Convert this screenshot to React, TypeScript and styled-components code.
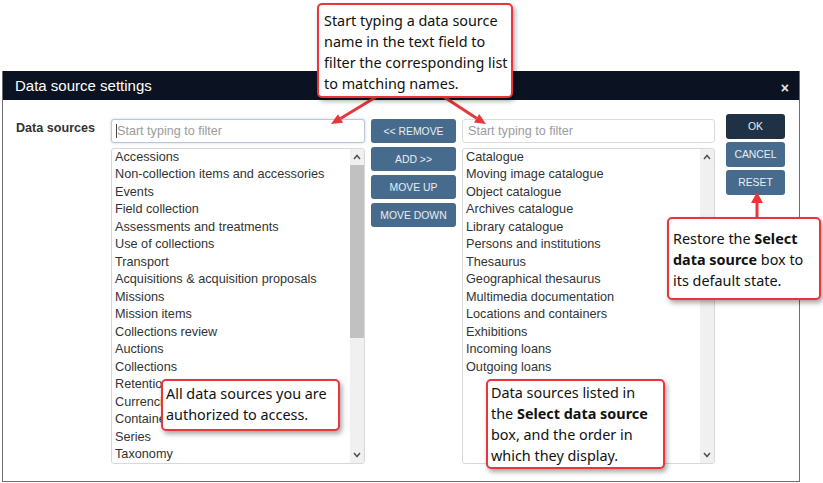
import React from 'react';
import styled, { createGlobalStyle } from 'styled-components';

const Global = createGlobalStyle`
  html, body { margin: 0; padding: 0; background: #fff; }
  body { font-family: "Liberation Sans", Arial, sans-serif; }
`;

const RED = '#e8363c';

const Page = styled.div`
  position: relative;
  width: 823px;
  height: 483px;
  overflow: hidden;
  background: #fff;
  padding: 71px 0 0 2px;
  box-sizing: border-box;
`;

const Dialog = styled.div`
  width: 798px;
  height: 411px;
  box-sizing: border-box;
  border: 1px solid #6e6e6e;
  border-top: none;
  display: flex;
  flex-direction: column;
  background: #fff;
`;

const Header = styled.div`
  height: 29px;
  flex: none;
  background: #0b1322;
  display: flex;
  align-items: center;
  justify-content: space-between;
  padding: 0 10px 0 12px;
`;

const Title = styled.div`
  color: #fff;
  font-size: 15px;
  line-height: 18px;
  margin-top: 1px;
`;

const Close = styled.div`
  color: #e6e6e6;
  font-size: 14px;
  font-weight: bold;
  line-height: 14px;
  margin-top: 4px;
`;

const Body = styled.div`
  flex: 1;
  display: flex;
  align-items: flex-start;
  padding: 14px 0 0 13px;
`;

const Label = styled.div`
  width: 95px;
  flex: none;
  margin-top: 7px;
  font-size: 12.6px;
  line-height: 15px;
  font-weight: bold;
  color: #333;
`;

const Column = styled.div<{ $w: number; $ml: number; $mt: number }>`
  width: ${p => p.$w}px;
  margin-left: ${p => p.$ml}px;
  margin-top: ${p => p.$mt}px;
  flex: none;
  display: flex;
  flex-direction: column;
`;

const FilterWrap = styled.div`
  position: relative;
  height: 24px;
  margin-bottom: 5px;
`;

const Filter = styled.input<{ $focused?: boolean }>`
  width: 100%;
  height: 24px;
  box-sizing: border-box;
  border: 1px solid ${p => (p.$focused ? '#b9c8d7' : '#dcdcdc')};
  border-radius: 3px;
  padding: 0 0 0 5px;
  margin: 0;
  font: 12.6px "Liberation Sans", Arial, sans-serif;
  color: #333;
  outline: none;
  box-shadow: ${p => (p.$focused ? '0 0 3px rgba(90,130,170,0.35)' : 'none')};
  &::placeholder { color: #9c9c9c; }
`;

const Caret = styled.span`
  position: absolute;
  left: 5px;
  top: 5px;
  width: 1px;
  height: 14px;
  background: #444;
`;

const ListBox = styled.div`
  height: 316px;
  box-sizing: border-box;
  border: 1px solid #d8d8d8;
  border-radius: 3px;
  display: flex;
  overflow: hidden;
  background: #fff;
`;

const Items = styled.div`
  flex: 1;
  padding-left: 3px;
  margin-top: -0.5px;
  overflow: hidden;
`;

const Item = styled.div`
  font-size: 12.7px;
  line-height: 17.5px;
  color: #333;
  white-space: nowrap;
`;

const Scrollbar = styled.div`
  width: 14px;
  flex: none;
  background: #f0f0f0;
  display: flex;
  flex-direction: column;
`;

const ArrowCell = styled.div`
  height: 16px;
  flex: none;
  display: flex;
  align-items: center;
  justify-content: center;
`;

const Track = styled.div`
  flex: 1;
`;

const Thumb = styled.div`
  background: #c1c1c1;
  width: 100%;
`;

const Buttons = styled.div<{ $gap: number }>`
  display: flex;
  flex-direction: column;
  gap: ${p => p.$gap}px;
`;

const Btn = styled.button<{ $dark?: boolean; $h: number }>`
  height: ${p => p.$h}px;
  width: 100%;
  border: none;
  border-radius: 3px;
  background: ${p => (p.$dark ? '#1f3145' : '#476b8c')};
  color: #e8eef4;
  font: 10.4px "Liberation Sans", Arial, sans-serif;
  padding: 0;
  margin: 0;
  cursor: pointer;
`;

const Callout = styled.div<{ $x: number; $y: number; $w: number; $h: number; $pt: number; $pl: number }>`
  position: absolute;
  left: ${p => p.$x}px;
  top: ${p => p.$y}px;
  width: ${p => p.$w}px;
  height: ${p => p.$h}px;
  box-sizing: border-box;
  background: #fff;
  border: 2px solid ${RED};
  border-radius: 5px;
  box-shadow: 2px 3px 5px rgba(0, 0, 0, 0.35);
  padding: ${p => p.$pt}px 0 0 ${p => p.$pl}px;
  font-family: "Noto Sans", "Open Sans", sans-serif;
  font-size: 14.4px;
  line-height: 21px;
  color: #111;
  white-space: nowrap;
  z-index: 3;
  b { font-weight: bold; }
`;

const Arrows = styled.svg`
  position: absolute;
  left: 0;
  top: 0;
  z-index: 2;
  pointer-events: none;
`;

const Chevron = ({ up }: { up?: boolean }) => (
  <svg width="8" height="6" viewBox="0 0 8 6">
    <polyline
      points={up ? '1,5 4,1.5 7,5' : '1,1 4,4.5 7,1'}
      fill="none"
      stroke="#505050"
      strokeWidth="1.5"
    />
  </svg>
);

const leftItems = [
  'Accessions',
  'Non-collection items and accessories',
  'Events',
  'Field collection',
  'Assessments and treatments',
  'Use of collections',
  'Transport',
  'Acquisitions & acquisition proposals',
  'Missions',
  'Mission items',
  'Collections review',
  'Auctions',
  'Collections',
  'Retention',
  'Currencies',
  'Containers',
  'Series',
  'Taxonomy',
];

const rightItems = [
  'Catalogue',
  'Moving image catalogue',
  'Object catalogue',
  'Archives catalogue',
  'Library catalogue',
  'Persons and institutions',
  'Thesaurus',
  'Geographical thesaurus',
  'Multimedia documentation',
  'Locations and containers',
  'Exhibitions',
  'Incoming loans',
  'Outgoing loans',
];

const List = ({ items, thumb }: { items: string[]; thumb?: number }) => (
  <ListBox>
    <Items>
      {items.map(t => (
        <Item key={t}>{t}</Item>
      ))}
    </Items>
    <Scrollbar>
      <ArrowCell>
        <Chevron up />
      </ArrowCell>
      <Track>{thumb ? <Thumb style={{ height: thumb }} /> : null}</Track>
      <ArrowCell>
        <Chevron />
      </ArrowCell>
    </Scrollbar>
  </ListBox>
);

export default function App() {
  return (
    <>
      <Global />
      <Page>
        <Dialog>
          <Header>
            <Title>Data source settings</Title>
            <Close>×</Close>
          </Header>
          <Body>
            <Label>Data sources</Label>
            <Column $w={254} $ml={0} $mt={5}>
              <FilterWrap>
                <Filter $focused placeholder="Start typing to filter" readOnly />
                <Caret />
              </FilterWrap>
              <List items={leftItems} thumb={173} />
            </Column>
            <Column $w={85} $ml={6} $mt={5}>
              <Buttons $gap={4}>
                <Btn $h={24}>&lt;&lt; REMOVE</Btn>
                <Btn $h={24}>ADD &gt;&gt;</Btn>
                <Btn $h={24}>MOVE UP</Btn>
                <Btn $h={24}>MOVE DOWN</Btn>
              </Buttons>
            </Column>
            <Column $w={253} $ml={6} $mt={5}>
              <FilterWrap>
                <Filter placeholder="Start typing to filter" readOnly />
              </FilterWrap>
              <List items={rightItems} />
            </Column>
            <Column $w={59} $ml={11} $mt={0}>
              <Buttons $gap={3}>
                <Btn $h={25} $dark>OK</Btn>
                <Btn $h={25}>CANCEL</Btn>
                <Btn $h={25}>RESET</Btn>
              </Buttons>
            </Column>
          </Body>
        </Dialog>

        <Arrows width="823" height="483" viewBox="0 0 823 483">
          <line x1="376" y1="97" x2="340.5" y2="118.5" stroke={RED} strokeWidth="3" />
          <polygon points="331,124 343,122.8 338,114.2" fill={RED} />
          <line x1="444" y1="97" x2="476.6" y2="118.2" stroke={RED} strokeWidth="3" />
          <polygon points="486,124 474,122.5 479.2,113.9" fill={RED} />
          <line x1="757" y1="218" x2="757" y2="202" stroke={RED} strokeWidth="3" />
          <polygon points="757,192 751,203 763,203" fill={RED} />
        </Arrows>

        <Callout $x={317} $y={3} $w={196} $h={95} $pt={5} $pl={5}>
          Start typing a data source
          <br />
          name in the text field to
          <br />
          filter the corresponding list
          <br />
          to matching names.
        </Callout>

        <Callout $x={667} $y={217} $w={154} $h={83} $pt={9} $pl={4}>
          Restore the <b>Select</b>
          <br />
          <b>data source</b> box to
          <br />
          its default state.
        </Callout>

        <Callout $x={161} $y={379} $w={179} $h={52} $pt={2} $pl={3}>
          All data sources you are
          <br />
          authorized to access.
        </Callout>

        <Callout $x={486} $y={379} $w={179} $h={90} $pt={1} $pl={3}>
          Data sources listed in
          <br />
          the <b>Select data source</b>
          <br />
          box, and the order in
          <br />
          which they display.
        </Callout>
      </Page>
    </>
  );
}
